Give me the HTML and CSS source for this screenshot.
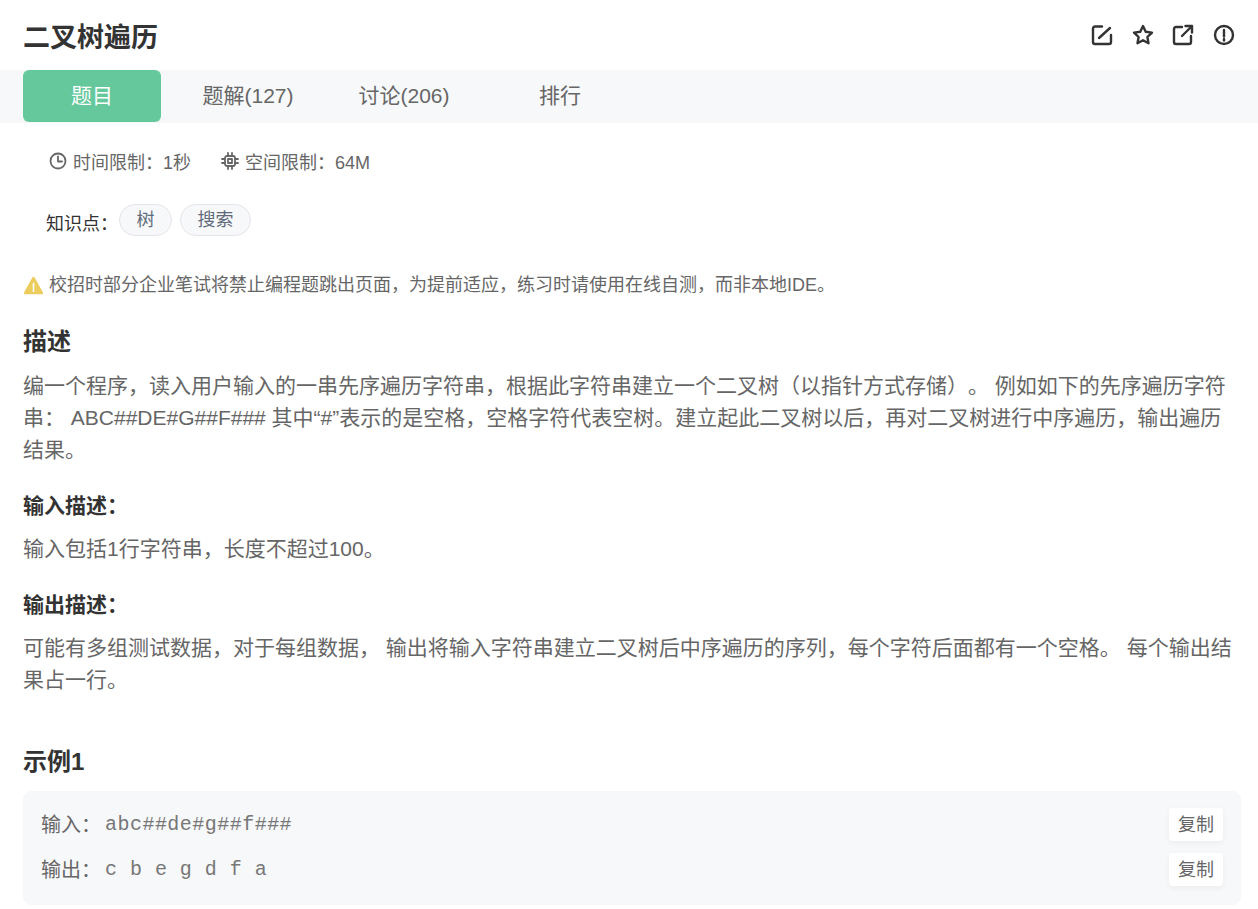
FILE: index.html
```html
<!DOCTYPE html>
<html lang="zh-CN">

<head>
    <meta charset="UTF-8">
    <meta name="viewport" content="width=device-width, initial-scale=1.0">
    <title>二叉树遍历</title>
    <link rel="stylesheet" href="styles.css">
</head>

<body>

    <div class="top">
        <h1>二叉树遍历</h1>
        <div class="acciones">
            <svg viewBox="0 0 24 24"><path d="M12 3.500H5a2 2 0 0 0-2 2v13.500a2 2 0 0 0 2 2h14a2 2 0 0 0 2-2v-7"/><path d="M20 5L9 15"/></svg>
            <svg viewBox="0 0 24 24"><path d="M12 3l2.700 5.700 6.300.9-4.600 4.400 1.100 6.300L12 17.300l-5.500 3 1.100-6.300L3 9.600l6.300-.9z"/></svg>
            <svg viewBox="0 0 24 24"><path d="M11 4H5a2 2 0 0 0-2 2v13a2 2 0 0 0 2 2h13a2 2 0 0 0 2-2v-6"/><path d="M11 13L20.500 3.500"/><path d="M14.500 3H21V9.500"/></svg>
            <svg viewBox="0 0 24 24"><circle cx="12" cy="12" r="9"/><path d="M12 7v6.500"/><path d="M12 16v1.500"/></svg>
        </div>
    </div>

    <!-- Pestañas -->
    <div class="tabs">
        <div class="tab activo">题目</div>
        <div class="tab">题解(127)</div>
        <div class="tab">讨论(206)</div>
        <div class="tab">排行</div>
    </div>

    <div class="limites">
        <span class="limite">
            <svg viewBox="0 0 20 20"><circle cx="10" cy="10" r="7.500"/><path d="M10 5.500V10.500H14"/></svg>
            时间限制：1秒
        </span>
        <span class="limite">
            <svg viewBox="0 0 20 20"><rect x="5" y="5" width="10" height="10" rx="2"/><rect x="8" y="8" width="4" height="4"/><path d="M8 2v3M12 2v3M8 15v3M12 15v3M2 8h3M2 12h3M15 8h3M15 12h3"/></svg>
            空间限制：64M
        </span>
    </div>

    <div class="saberes">
        <span class="saberes-label">知识点：</span>
        <span class="pill">树</span>
        <span class="pill">搜索</span>
    </div>

    <p class="aviso">
        <svg viewBox="0 0 20 20"><path class="triangulo" d="M10 2L19 18H1z"/><path class="marca" d="M10 8v5M10 14.500v1.500"/></svg>
        校招时部分企业笔试将禁止编程题跳出页面，为提前适应，练习时请使用在线自测，而非本地IDE。
    </p>

    <h2>描述</h2>
    <p class="texto">编一个程序，读入用户输入的一串先序遍历字符串，根据此字符串建立一个二叉树（以指针方式存储）。 例如如下的先序遍历字符串： ABC##DE#G##F### 其中“#”表示的是空格，空格字符代表空树。建立起此二叉树以后，再对二叉树进行中序遍历，输出遍历结果。</p>

    <h3>输入描述：</h3>
    <p class="texto">输入包括1行字符串，长度不超过100。</p>

    <h3>输出描述：</h3>
    <p class="texto">可能有多组测试数据，对于每组数据， 输出将输入字符串建立二叉树后中序遍历的序列，每个字符后面都有一个空格。 每个输出结果占一行。</p>

    <h2 class="ejemplo-titulo">示例1</h2>
    <div class="ejemplo">
        <div class="fila">
            <span class="etiqueta">输入：</span>
            <code>abc##de#g##f###</code>
            <button>复制</button>
        </div>
        <div class="fila">
            <span class="etiqueta">输出：</span>
            <code>c b e g d f a</code>
            <button>复制</button>
        </div>
    </div>

</body>

</html>
```

FILE: styles.css
```css
body {
    font-family: "Liberation Sans", "Noto Sans CJK SC", sans-serif;
    text-spacing-trim: space-all;
    margin: 0;
    padding: 0 17px 0 23px;
    background-color: #fff;
    color: #666;
    overflow: hidden;
}

svg {
    fill: none;
    stroke: currentColor;
    stroke-width: 2.400;
    stroke-linecap: round;
    stroke-linejoin: round;
    flex-shrink: 0;
}

.top {
    display: flex;
    align-items: center;
    justify-content: space-between;
    height: 70px;
    margin-right: 5px;
}

h1 {
    margin: 0;
    font-size: 27px;
    font-weight: bold;
    color: #333;
}

.acciones {
    display: flex;
    gap: 16.600px;
    color: #333;
}

.acciones svg {
    width: 24px;
    height: 24px;
}

.tabs {
    display: flex;
    gap: 18px;
    height: 53px;
    margin: 0 -17px 0 -23px;
    padding-left: 23px;
    background-color: #f7f8fa;
}

.tab {
    width: 138px;
    height: 52px;
    line-height: 52px;
    text-align: center;
    font-size: 21px;
    color: #666;
}

.activo {
    color: #fff;
    background-color: #64c89c;
    border-radius: 6px;
}

.limites {
    display: flex;
    gap: 29px;
    height: 26px;
    margin-top: 25px;
    padding-left: 25px;
    font-size: 18px;
}

.limite {
    display: flex;
    align-items: center;
    gap: 5px;
    color: #666;
}

.limite svg {
    width: 20px;
    height: 20px;
    stroke-width: 1.800;
}

.saberes {
    display: flex;
    align-items: center;
    gap: 8px;
    margin-top: 30px;
    padding-left: 23px;
    height: 32px;
    font-size: 18px;
}

.saberes-label {
    width: 65px;
    color: #333;
    padding-top: 4px;
    white-space: nowrap;
}

.pill {
    height: 32px;
    line-height: 30px;
    box-sizing: border-box;
    padding: 0 16.500px;
    border: 1px solid #e3e5e9;
    border-radius: 16px;
    background-color: #f7f8fa;
    color: #5f6b7a;
}

.aviso {
    display: flex;
    align-items: center;
    gap: 6px;
    margin: 36px 0 0;
    padding-left: 1px;
    font-size: 18px;
    line-height: 26px;
    color: #666;
}

.aviso svg {
    width: 19px;
    height: 19px;
}

.triangulo {
    fill: #eccc5c;
    stroke: #eccc5c;
}

.marca {
    stroke: #fff;
    stroke-width: 1.800;
}

h2 {
    margin: 27px 0 0;
    font-size: 24px;
    line-height: 34px;
    font-weight: bold;
    color: #333;
}

h3 {
    margin: 24px 0 0;
    font-size: 21px;
    line-height: 32px;
    font-weight: bold;
    color: #333;
}

.texto {
    margin: 11px 0 0;
    font-size: 21px;
    line-height: 32px;
    color: #666;
}

.ejemplo-titulo {
    margin-top: 49px;
}

.ejemplo {
    margin-top: 12px;
    padding: 11px 18px 13px;
    background-color: #f7f8fa;
    border-radius: 8px;
}

.fila {
    display: flex;
    align-items: center;
    height: 45px;
    font-size: 20px;
}

.etiqueta {
    width: 64px;
    color: #666;
    white-space: nowrap;
    padding-bottom: 2px;
}

code {
    flex: 1;
    font-family: "Liberation Mono", monospace;
    font-size: 20px;
    letter-spacing: 0.470px;
    color: #777;
    white-space: pre-wrap;
}

button {
    width: 54px;
    height: 33px;
    padding: 0 0 4px;
    font-family: inherit;
    font-size: 18px;
    color: #666;
    background-color: #fff;
    border: none;
    border-radius: 4px;
    box-shadow: 0px 2px 6px rgba(0, 0, 0, 0.05);
}
```
